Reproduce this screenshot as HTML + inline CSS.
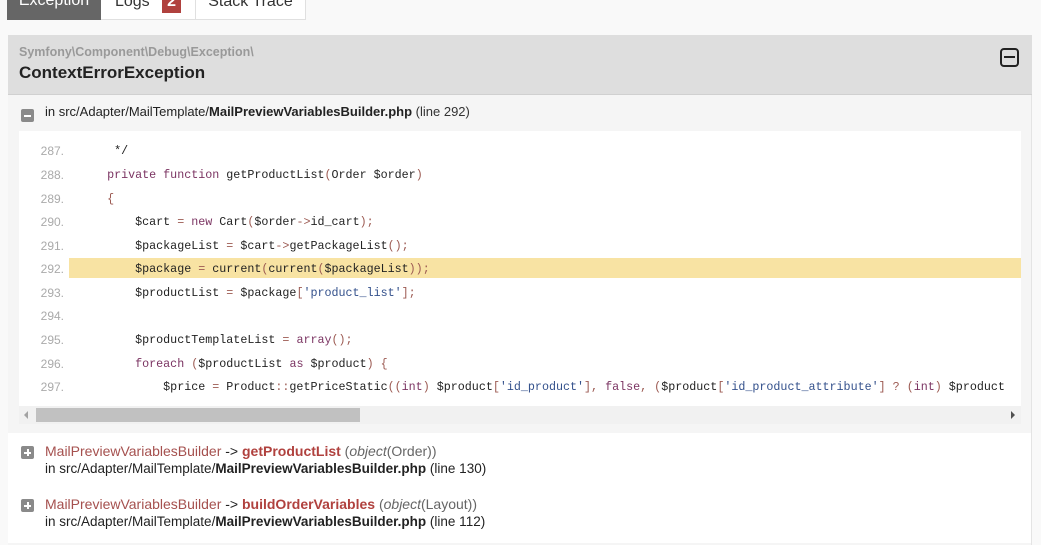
<!DOCTYPE html>
<html><head><meta charset="utf-8"><style>
*{margin:0;padding:0;box-sizing:border-box}
body{width:1041px;height:533px;overflow:hidden;background:#f9f9f9;font-family:"Liberation Sans",Arial,sans-serif;color:#222;position:relative}
.a{position:absolute;white-space:nowrap}
.tab{position:absolute;top:-10px;height:30px;font-size:16px;line-height:22px;text-align:center}
.code{font-family:"Liberation Mono",monospace;font-size:11.7px;color:#222;white-space:pre}
.ln{font-size:12px;color:#aaa;width:44px;text-align:right;left:20px}
.k{color:#7b3462}.p{color:#9c5a52}.s{color:#34518c}
.icon{position:absolute;width:13px;height:13px;background:#8a8a8a;border-radius:2px}
.icon:before{content:"";position:absolute;left:3px;top:5.5px;width:7px;height:2px;background:#fff}
.plus:after{content:"";position:absolute;left:5.5px;top:3px;width:2px;height:7px;background:#fff}
.tr{font-size:14px;left:45px}
.red{color:#b0413e}.lred{color:#a5504e}
</style></head><body>
<div class="tab" style="left:7px;width:94px;background:#666;color:#fff">Exception</div>
<div class="tab" style="left:101px;width:95px;background:#fff;border:1px solid #e0e0e0;border-left:none;color:#333">Logs <span style="display:inline-block;background:#b0413e;color:#fff;font-weight:bold;padding:0 5px;margin-left:8px;line-height:22px">2</span></div>
<div class="tab" style="left:196px;width:110px;background:#fff;border:1px solid #e0e0e0;border-left:none;color:#333">Stack Trace</div>

<div class="a" style="left:8px;top:35px;width:1024px;height:510px;background:#f5f5f5;border-right:1px solid #e4e4e4"></div>
<div class="a" style="left:8px;top:35px;width:1024px;height:60px;background:#dedede;border-bottom:1px solid #d0d0d0"></div>
<div class="a" style="left:19px;top:45px;font-size:12.5px;font-weight:bold;color:#999">Symfony\Component\Debug\Exception\</div>
<div class="a" style="left:19px;top:63px;font-size:17px;font-weight:bold;color:#222">ContextErrorException</div>
<div class="a" style="left:1000px;top:48px;width:19px;height:19px;border:2px solid #222;border-radius:4px"></div>
<div class="a" style="left:1004px;top:56px;width:11px;height:2px;background:#222"></div>

<div class="icon" style="left:21px;top:109px"></div>
<div class="a" style="left:45px;top:104px;font-size:13px;color:#222">in src/Adapter/MailTemplate/<b>MailPreviewVariablesBuilder.php</b> <span style="color:#333">(line 292)</span></div>

<div class="a" style="left:19px;top:131px;width:1002px;height:275px;background:#fff"></div>
<div class="a" style="left:69px;top:258px;width:952px;height:20px;background:#f8e3a3"></div>

<div class="a ln" style="top:144px">287.</div><div class="a code" style="left:79px;top:144px">     */</div>
<div class="a ln" style="top:168px">288.</div><div class="a code" style="left:79px;top:168px">    <span class="k">private function</span> getProductList<span class="p">(</span>Order $order<span class="p">)</span></div>
<div class="a ln" style="top:192px">289.</div><div class="a code" style="left:79px;top:192px">    <span class="p">{</span></div>
<div class="a ln" style="top:215px">290.</div><div class="a code" style="left:79px;top:215px">        $cart <span class="p">=</span> <span class="k">new</span> Cart<span class="p">(</span>$order<span class="p">-&gt;</span>id_cart<span class="p">);</span></div>
<div class="a ln" style="top:239px">291.</div><div class="a code" style="left:79px;top:239px">        $packageList <span class="p">=</span> $cart<span class="p">-&gt;</span>getPackageList<span class="p">();</span></div>
<div class="a ln" style="top:262px">292.</div><div class="a code" style="left:79px;top:262px">        $package <span class="p">=</span> current<span class="p">(</span>current<span class="p">(</span>$packageList<span class="p">));</span></div>
<div class="a ln" style="top:286px">293.</div><div class="a code" style="left:79px;top:286px">        $productList <span class="p">=</span> $package<span class="p">[</span><span class="s">'product_list'</span><span class="p">];</span></div>
<div class="a ln" style="top:309px">294.</div>
<div class="a ln" style="top:333px">295.</div><div class="a code" style="left:79px;top:333px">        $productTemplateList <span class="p">=</span> <span class="k">array</span><span class="p">();</span></div>
<div class="a ln" style="top:357px">296.</div><div class="a code" style="left:79px;top:357px">        <span class="k">foreach</span> <span class="p">(</span>$productList <span class="k">as</span> $product<span class="p">) {</span></div>
<div class="a ln" style="top:380px">297.</div><div class="a code" style="left:79px;top:380px;width:942px;overflow:hidden">            $price <span class="p">=</span> Product<span class="p">::</span>getPriceStatic<span class="p">((</span><span class="k">int</span><span class="p">)</span> $product<span class="p">[</span><span class="s">'id_product'</span><span class="p">],</span> <span class="k">false</span><span class="p">, (</span>$product<span class="p">[</span><span class="s">'id_product_attribute'</span><span class="p">] ? (</span><span class="k">int</span><span class="p">)</span> $product</div>

<div class="a" style="left:19px;top:406px;width:1002px;height:18px;background:#f1f1f1"></div>
<div class="a" style="left:36px;top:408px;width:324px;height:14px;background:#c1c1c1"></div>
<div class="a" style="left:24px;top:411px;width:0;height:0;border-top:4px solid transparent;border-bottom:4px solid transparent;border-right:4px solid #a3a3a3"></div>
<div class="a" style="left:1011px;top:411px;width:0;height:0;border-top:4px solid transparent;border-bottom:4px solid transparent;border-left:4px solid #505050"></div>

<div class="a" style="left:8px;top:433px;width:1024px;height:110px;background:#fff;border-right:1px solid #e4e4e4"></div>
<div class="icon plus" style="left:21px;top:446px"></div>
<div class="a tr" style="top:443px"><span class="lred">MailPreviewVariablesBuilder</span> -&gt; <b class="red">getProductList</b> <span style="color:#666">(<i>object</i>(Order))</span></div>
<div class="a tr" style="top:461px;font-size:13.5px">in src/Adapter/MailTemplate/<b>MailPreviewVariablesBuilder.php</b> (line 130)</div>
<div class="icon plus" style="left:21px;top:499px"></div>
<div class="a tr" style="top:496px"><span class="lred">MailPreviewVariablesBuilder</span> -&gt; <b class="red">buildOrderVariables</b> <span style="color:#666">(<i>object</i>(Layout))</span></div>
<div class="a tr" style="top:514px;font-size:13.5px">in src/Adapter/MailTemplate/<b>MailPreviewVariablesBuilder.php</b> (line 112)</div>
</body></html>
